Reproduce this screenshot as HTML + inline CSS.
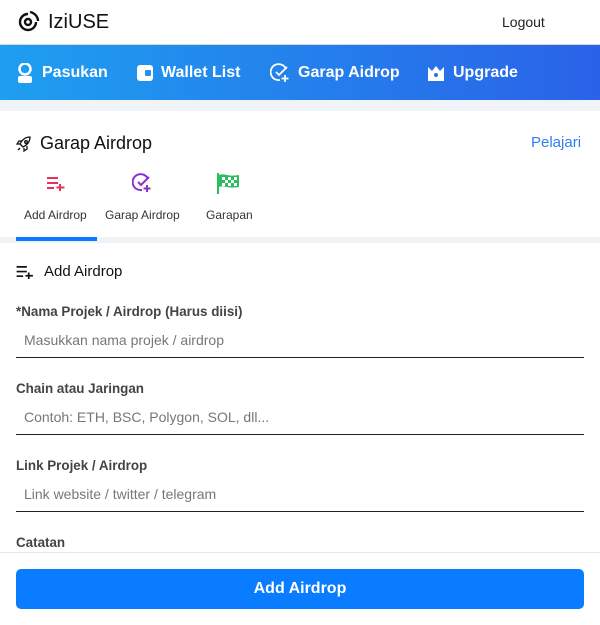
<!DOCTYPE html>
<html><head><meta charset="utf-8"><style>
*{margin:0;padding:0;box-sizing:border-box}
body{width:600px;height:625px;overflow:hidden;background:#fff;font-family:"Liberation Sans",sans-serif;color:#222;position:relative}
.hdr{height:45px;border-bottom:1px solid #d8d8d8;position:relative}
.logo{position:absolute;left:16px;top:10px;display:flex;align-items:center;font-size:20px;color:#111}
.logo svg{margin-right:8px}
.logout{position:absolute;left:502px;top:14px;font-size:14px;color:#222}
.nav{height:55px;background:linear-gradient(90deg,#1e9ff0,#2a62e8);display:flex;align-items:center;color:#fff;font-weight:bold;font-size:16px}
.nav span{display:flex;align-items:center;position:absolute}
.nav svg{margin-right:8px}
.gap{height:11px;background:#f0f3f8}
.t{position:absolute;white-space:nowrap}
.tab{font-size:12px;color:#333}
.lbl{font-size:13.4px;font-weight:bold;color:#444}
.ph{font-size:14px;color:#777}
.ln{position:absolute;left:16px;width:568px;height:1px;background:#222}
</style></head><body>
<div class="hdr">
<div class="logo"><svg width="24" height="24" viewBox="0 0 24 24" fill="none" stroke="#111" stroke-width="2.4"><circle cx="12" cy="12" r="3"/><path d="M12 4a8 8 0 1 0 8 8"/><path d="M14 2c5 1 8 5 8 9"/></svg>IziUSE</div>
<div class="logout">Logout</div>
</div>
<div class="nav">
<span style="left:16px"><svg width="18" height="20" viewBox="0 0 18 20" fill="#fff"><circle cx="9" cy="6" r="5.5" fill="none" stroke="#fff" stroke-width="2.5"/><rect x="2" y="13" width="14" height="7" rx="2"/></svg>Pasukan</span>
<span style="left:137px"><svg width="16" height="16" viewBox="0 0 16 16"><rect x="0" y="0" width="16" height="16" rx="3" fill="#fff"/><rect x="8" y="5" width="6" height="6" rx="1" fill="#2592ee"/></svg>Wallet List</span>
<span style="left:270px"><svg width="20" height="20" viewBox="0 0 20 20" fill="none" stroke="#fff" stroke-width="1.8"><path d="M16 6A8 8 0 1 0 10 17"/><path d="M6 9l3 3 8-8"/><path d="M15 12v7M11.5 15.5h7"/></svg>Garap Aidrop</span>
<span style="left:427px"><svg width="18" height="16" viewBox="0 0 18 16" fill="#fff"><path d="M1 2l4 4 4-5 4 5 4-4v14H1z"/><circle cx="9" cy="10" r="2" fill="#2a70ea"/></svg>Upgrade</span>
</div>
<div class="gap"></div>
<div class="t" style="left:16px;top:133px;font-size:18px;color:#111;display:flex;align-items:center"><svg width="16" height="16" viewBox="0 0 16 16" fill="none" stroke="#111" stroke-width="1.3" style="margin-right:8px"><path d="M6 10l-2-2c2-4 5-7 10-7 0 5-3 8-7 10z"/><circle cx="10" cy="6" r="1.3"/><path d="M4 8H1l2-3h3M8 12v3l3-2v-3M2 14l2-2"/></svg>Garap Airdrop</div>
<div class="t" style="left:531px;top:134px;font-size:15px;color:#2d7ef0">Pelajari</div>
<svg class="t" style="left:47px;top:176px" width="18" height="15" viewBox="0 0 18 15" stroke="#e8305a" stroke-width="2"><path d="M0 2h11M0 7h11M0 12h7M13 8v7M9.5 11.5h8"/></svg>
<svg class="t" style="left:132px;top:173px" width="20" height="20" viewBox="0 0 20 20" fill="none" stroke="#8a2ed6" stroke-width="2"><path d="M16 6A8 8 0 1 0 10 17"/><path d="M6 9l3 3 8-8"/><path d="M15 12v7M11.5 15.5h7"/></svg>
<svg class="t" style="left:217px;top:172px" width="23" height="22" viewBox="0 0 23 22"><path d="M1 1v21" stroke="#2bbd5e" stroke-width="2"/><path d="M2 3c6-2 8 2 20 0v12c-12 2-14-2-20 0z" fill="#2bbd5e"/><g fill="#fff"><rect x="5" y="5" width="3" height="3"/><rect x="11" y="5" width="3" height="3"/><rect x="17" y="5" width="3" height="3"/><rect x="8" y="8" width="3" height="3"/><rect x="14" y="8" width="3" height="3"/><rect x="5" y="11" width="3" height="3"/><rect x="11" y="11" width="3" height="3"/><rect x="17" y="11" width="3" height="3"/></g></svg>
<div class="t tab" style="left:24px;top:208px">Add Airdrop</div>
<div class="t tab" style="left:105px;top:208px">Garap Airdrop</div>
<div class="t tab" style="left:206px;top:208px">Garapan</div>
<div style="position:absolute;left:0;top:237px;width:600px;height:6px;background:#f0f3f8"></div>
<div style="position:absolute;left:16px;top:237px;width:81px;height:4px;background:#0a7cff"></div>
<div class="t" style="left:16px;top:263px;font-size:15px;color:#111;display:flex;align-items:center"><svg width="18" height="14" viewBox="0 0 18 15" stroke="#111" stroke-width="1.8" style="margin-right:10px"><path d="M0 2h11M0 7h11M0 12h7M13 8v7M9.5 11.5h8"/></svg>Add Airdrop</div>
<div class="t lbl" style="left:16px;top:304px">*Nama Projek / Airdrop (Harus diisi)</div>
<div class="t ph" style="left:24px;top:332px">Masukkan nama projek / airdrop</div>
<div class="ln" style="top:357px"></div>
<div class="t lbl" style="left:16px;top:381px">Chain atau Jaringan</div>
<div class="t ph" style="left:24px;top:409px">Contoh: ETH, BSC, Polygon, SOL, dll...</div>
<div class="ln" style="top:434px"></div>
<div class="t lbl" style="left:16px;top:458px">Link Projek / Airdrop</div>
<div class="t ph" style="left:24px;top:486px">Link website / twitter / telegram</div>
<div class="ln" style="top:511px"></div>
<div class="t lbl" style="left:16px;top:535px">Catatan</div>
<div style="position:absolute;left:0;top:552px;width:600px;height:73px;background:#fff;border-top:1px solid #e6e6e6"></div>
<div style="position:absolute;left:16px;top:569px;width:568px;height:40px;background:#0a7cff;border-radius:5px;color:#fff;font-size:16px;font-weight:bold;text-align:center;line-height:40px">Add Airdrop</div>
</body></html>
